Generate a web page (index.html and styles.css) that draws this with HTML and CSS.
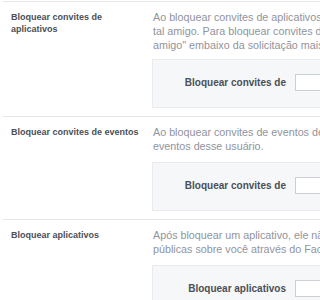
FILE: index.html
```html
<!DOCTYPE html>
<html lang="pt-BR">
<head>
<meta charset="utf-8">
<title>Bloquear</title>
<link rel="stylesheet" href="styles.css">
</head>
<body>
<div class="page">
  <section class="row first">
    <div class="label">Bloquear convites de aplicativos</div>
    <div class="content">
      <p class="desc">Ao bloquear convites de aplicativos de alguém, você ignorará automaticamente futuras solicitações de aplicativos de<br>tal amigo. Para bloquear convites de um amigo específico, clique no link "Ignorar todos de tal<br>amigo" embaixo da solicitação mais recente.</p>
      <div class="box">
        <label class="field-label">Bloquear convites de</label>
        <span class="input"></span>
      </div>
    </div>
  </section>
  <section class="row">
    <div class="label">Bloquear convites de eventos</div>
    <div class="content">
      <p class="desc">Ao bloquear convites de eventos de alguém, você ignorará automaticamente futuras solicitações de<br>eventos desse usuário.</p>
      <div class="box">
        <label class="field-label">Bloquear convites de</label>
        <span class="input"></span>
      </div>
    </div>
  </section>
  <section class="row">
    <div class="label">Bloquear aplicativos</div>
    <div class="content">
      <p class="desc">Após bloquear um aplicativo, ele não poderá mais entrar em contato com você nem obter informações não<br>públicas sobre você através do Facebook.</p>
      <div class="box">
        <label class="field-label">Bloquear aplicativos</label>
        <span class="input"></span>
      </div>
    </div>
  </section>
</div>
</body>
</html>
```

FILE: styles.css
```css
html, body {
  margin: 0;
  padding: 0;
  overflow: hidden;
  background: #ffffff;
}

body {
  font-family: "Liberation Sans", Arial, sans-serif;
}

.page {
  width: 640px;
  margin-left: 3px;
}

.row {
  display: flex;
  border-top: 1px solid #e5e6e9;
  padding: 8px 0 8px 0;
}

.row.first {
  margin-top: 1px;
}

.label {
  width: 130px;
  padding: 1px 0 0 8px;
  margin-right: 12px;
  font-size: 9px;
  line-height: 12px;
  font-weight: bold;
  color: #4b4f56;
  flex-shrink: 0;
}

.content {
  flex: 1;
}

.desc {
  margin: 0;
  font-size: 10.75px;
  line-height: 14px;
  color: #90949c;
  white-space: nowrap;
}

.box {
  margin-top: 9px;
  margin-left: -1px;
  box-sizing: border-box;
  height: 49px;
  background: #f6f7f9;
  border: 1px solid #e9ebee;
  border-right: none;
  display: flex;
  align-items: center;
  padding-bottom: 3px;
}

.first .box {
  margin-top: 7px;
}

.field-label {
  width: 133px;
  text-align: right;
  margin-right: 9px;
  font-size: 10px;
  font-weight: bold;
  color: #4b4f56;
  flex-shrink: 0;
}

.input {
  display: block;
  width: 200px;
  height: 17px;
  box-sizing: border-box;
  background: #ffffff;
  border: 1px solid #ccd0d5;
}
```
